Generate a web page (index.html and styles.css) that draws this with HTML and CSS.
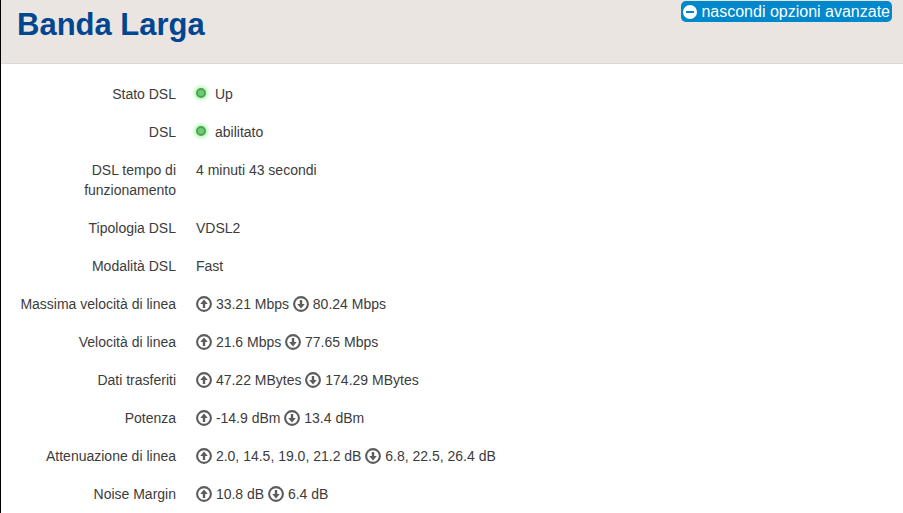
FILE: index.html
```
<!DOCTYPE html>
<html lang="it">
<head>
    <meta charset="utf-8">
    <title>Banda Larga</title>
    <link rel="stylesheet" href="styles.css">
</head>
<body>
    <svg class="sprite" aria-hidden="true">
        <symbol id="icon-up" viewBox="0 0 16 16">
            <circle cx="8" cy="8" r="6.9" fill="none" stroke="currentColor" stroke-width="2.1"/>
            <path d="M8 3.6 L11.8 7.9 H9.2 V12 H6.8 V7.9 H4.2 Z" fill="currentColor"/>
        </symbol>
        <symbol id="icon-down" viewBox="0 0 16 16">
            <circle cx="8" cy="8" r="6.9" fill="none" stroke="currentColor" stroke-width="2.1"/>
            <path d="M8 12.4 L11.8 8.1 H9.2 V4 H6.8 V8.1 H4.2 Z" fill="currentColor"/>
        </symbol>
    </svg>

    <header class="modal-header">
        <h2>Banda Larga</h2>
        <button type="button" class="advanced">
            <svg class="minus" viewBox="0 0 14 14" aria-hidden="true">
                <circle cx="7" cy="7" r="7" fill="#fff"/>
                <rect x="3" y="6" width="8" height="2" fill="#0088cc"/>
            </svg>
            nascondi opzioni avanzate
        </button>
    </header>

    <main>
        <dl class="info">
            <dt>Stato DSL</dt>
            <dd><span class="light green"></span>Up</dd>

            <dt>DSL</dt>
            <dd><span class="light green"></span>abilitato</dd>

            <dt>DSL tempo di funzionamento</dt>
            <dd>4 minuti 43 secondi</dd>

            <dt>Tipologia DSL</dt>
            <dd>VDSL2</dd>

            <dt>Modalità DSL</dt>
            <dd>Fast</dd>

            <dt>Massima velocità di linea</dt>
            <dd>
                <svg class="icon"><use href="#icon-up"/></svg> 33.21 Mbps
                <svg class="icon"><use href="#icon-down"/></svg> 80.24 Mbps
            </dd>

            <dt>Velocità di linea</dt>
            <dd>
                <svg class="icon"><use href="#icon-up"/></svg> 21.6 Mbps
                <svg class="icon"><use href="#icon-down"/></svg> 77.65 Mbps
            </dd>

            <dt>Dati trasferiti</dt>
            <dd>
                <svg class="icon"><use href="#icon-up"/></svg> 47.22 MBytes
                <svg class="icon"><use href="#icon-down"/></svg> 174.29 MBytes
            </dd>

            <dt>Potenza</dt>
            <dd>
                <svg class="icon"><use href="#icon-up"/></svg> -14.9 dBm
                <svg class="icon"><use href="#icon-down"/></svg> 13.4 dBm
            </dd>

            <dt>Attenuazione di linea</dt>
            <dd>
                <svg class="icon"><use href="#icon-up"/></svg> 2.0, 14.5, 19.0, 21.2 dB
                <svg class="icon"><use href="#icon-down"/></svg> 6.8, 22.5, 26.4 dB
            </dd>

            <dt>Noise Margin</dt>
            <dd>
                <svg class="icon"><use href="#icon-up"/></svg> 10.8 dB
                <svg class="icon"><use href="#icon-down"/></svg> 6.4 dB
            </dd>
        </dl>
    </main>
</body>
</html>
```
FILE: styles.css
```
body {
    margin: 0;
    min-height: 100vh;
    border-left: 1px solid #000;
    background: #fff;
    color: #3c3c3c;
    font-family: "Liberation Sans", Arial, sans-serif;
    font-size: 14px;
    line-height: 20px;
}
.sprite {
    display: none;
}

/* header */
.modal-header {
    display: flex;
    justify-content: space-between;
    align-items: flex-start;
    padding: 0 11px 18px 16px;
    background: #eae5e1;
    border-bottom: 1px solid #dcd7d4;
}
.modal-header h2 {
    margin: 5px 0 0;
    color: #004691;
    font-size: 31px;
    line-height: 40px;
}
.advanced {
    display: flex;
    align-items: center;
    gap: 4px;
    margin-top: 1px;
    padding: 0 2px;
    border: 0;
    border-radius: 5px;
    background: #0088cc;
    color: #fff;
    font-family: inherit;
    font-size: 16px;
    line-height: 21px;
    cursor: pointer;
}
.minus {
    width: 14px;
    height: 14px;
}

/* line details */
.info {
    display: grid;
    grid-template-columns: 160px 1fr;
    gap: 18px 20px;
    margin: 0;
    padding: 20px 15px 0;
}
.info dt {
    text-align: right;
}
.info dd {
    margin: 0;
}
.icon {
    width: 16px;
    height: 16px;
    color: #5c5c5c;
    vertical-align: -3px;
}
.light {
    display: inline-block;
    box-sizing: border-box;
    width: 10px;
    height: 10px;
    margin-right: 9px;
    border: 2px solid #4aa854;
    border-radius: 50%;
    vertical-align: 1px;
}
.green {
    background: #74c878;
    box-shadow: 0 0 4px 1px #8df58d;
}
```
